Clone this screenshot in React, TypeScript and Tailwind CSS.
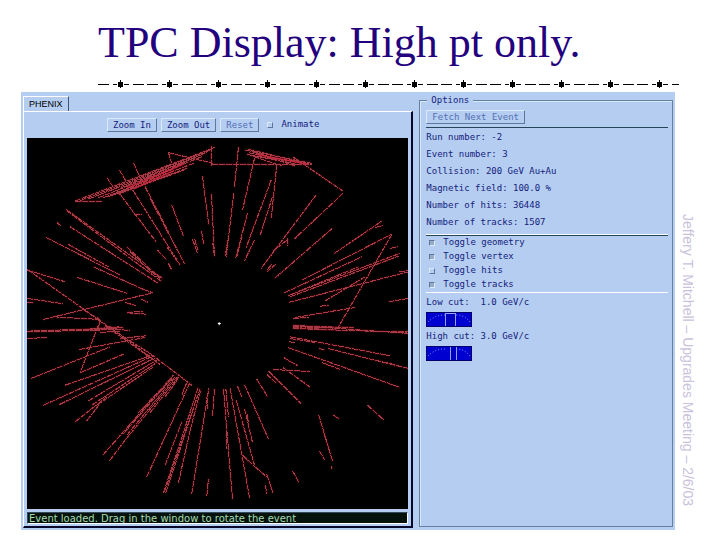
import { useState } from 'react'

// x1,y1 x2,y2 pairs, one group per quadrant of the detector
const quadrants = [
  {
    x: -21,
    y: -24,
    d: 'M165 213L585 52M180 212L570 60M205 207L560 68M235 203L545 80M250 203L520 100M265 200L500 115M280 195L540 75M300 190L490 120M320 180L480 125M300 175L500 92M310 180L470 112M165 214L245 214M445 68L580 100M445 68L455 100M573 48L573 108M260 142L282 175M298 120L325 165M340 98L362 148M290 180L408 335M343 253L365 253M338 180L480 405M375 170L445 305M390 205L440 300M440 300L494 402M412 360L440 390M440 350L480 405M455 225L490 318M547 138L566 285M574 192L583 380M544 303L551 342M517 328L532 368M524 328L533 360M578 340L583 380M445 400L455 420M138 238L430 447M140 242L425 455M110 277L122 287M150 290L415 460M78 322L300 435M145 343L265 410M320 350L420 445M330 365L410 440M220 410L370 478M370 478L398 488M172 442L322 490M22 420L135 455M22 418L280 600M70 568L398 488M22 505L130 521M22 517L42 518M100 560L240 568M315 517L347 526M320 548L378 552M320 546L370 545M362 507L383 516M240 568L235 600M255 590L310 592M230 560L245 575M195 598L300 590M190 538L250 580',
  },
  {
    x: 564,
    y: -24,
    d: 'M-10 103L290 103M70 50L58 170M56 190L33 380M38 330L30 378M118 85L82 240M97 250L62 383M80 320L65 380M185 103L168 265M168 150L93 352M172 200L135 315M118 330L88 392M90 60L290 100M100 58L285 103M100 68L270 102M110 65L240 108M115 78L260 95M95 72L200 108M130 70L230 100M105 75L250 104M232 80L383 183M383 190L237 327M303 195L138 415M215 330L175 362M218 325L218 347M350 296L178 445M155 425L182 402M155 420L170 403M357 370L500 273M480 292L503 286M260 450L530 312M530 312L370 590M208 488L440 380M218 497L553 370M225 500L550 378M220 517L580 425M228 493L430 410M552 425L580 422M520 515L580 505M525 355L548 350M330 512L450 440M315 528L340 526M240 562L420 532M233 565L280 562M232 588L415 592M232 592L370 600M350 545L360 540',
  },
  {
    x: -21,
    y: 561,
    d: 'M20 20L240 15M22 18L310 8M200 12L330 15M240 22L300 18M22 40L82 37M178 73L375 37M33 160L270 65M235 0L180 143M180 143L310 87M260 5L420 118M270 5L410 110M255 0L390 85M300 40L378 32M390 85L515 180M135 180L395 90M70 240L400 92M118 238L405 98M205 227L410 105M215 240L410 112M165 290L260 215M200 287L240 235M230 240L400 125M248 390L460 150M268 407L315 345M315 345L470 155M310 325L455 160M320 330L465 155M390 262L475 155M355 262L450 165M435 215L475 160M380 455L508 175M485 210L500 172M435 420L485 290M430 503L535 185M433 500L540 190M437 503L520 250M475 472L510 315M510 315L543 190M515 505L566 190M560 215L563 250M577 272L583 190M560 512L565 460',
  },
  {
    x: 564,
    y: 561,
    d: 'M232 5L415 8M232 0L580 25M232 10L575 22M528 18L580 20M225 35L525 92M225 40L300 52M222 50L238 52M310 70L330 75M338 70L580 130M480 105L545 120M218 67L555 187M320 112L375 133M205 97L248 122M172 133L285 139M203 127L285 186M160 138L258 235M155 148L185 175M125 162L158 216M67 183L80 215M88 178L160 342M25 190L52 522M32 190L40 275M45 190L103 517M63 225L118 420M88 250L112 352M82 390L120 425M120 425L155 455M155 447L173 502M150 480L155 505M310 268L352 408M325 320L345 385M313 378L328 403M352 268L373 282M457 240L505 284M232 437L252 473M350 422L350 430M95 265L100 290M35 320L35 370',
  },
]

const stats = [
  'Run number: -2',
  'Event number: 3',
  'Collision: 200 GeV Au+Au',
  'Magnetic field: 100.0 %',
  'Number of hits: 36448',
  'Number of tracks: 1507',
]

function Button({ children, disabled }: { children: string; disabled?: boolean }) {
  return (
    <button
      type="button"
      disabled={disabled}
      className="h-3.5 border border-t-[#dcebff] border-l-[#dcebff] border-r-[#5d7898] border-b-[#5d7898] px-[5px] leading-[12px] whitespace-nowrap disabled:text-[#5470b4]"
    >
      {children}
    </button>
  )
}

function Toggle({ label, initial }: { label: string; initial: boolean }) {
  const [on, setOn] = useState(initial)
  return (
    <label className="flex h-3.5 items-center gap-2">
      <input
        type="checkbox"
        checked={on}
        onChange={(e) => setOn(e.target.checked)}
        className="size-1.5 appearance-none border border-t-[#dcebff] border-l-[#dcebff] border-r-[#5d7898] border-b-[#5d7898] checked:border-t-[#5d7898] checked:border-l-[#5d7898] checked:border-r-[#dcebff] checked:border-b-[#dcebff] checked:bg-[#96abc6]"
      />
      {label}
    </label>
  )
}

function CutWheel({ label, value, narrow }: { label: string; value: number; narrow?: boolean }) {
  const [cut, setCut] = useState(value)
  return (
    <label className="block">
      <span className="block h-[19px] pt-[3px] leading-[12px] whitespace-pre">
        {label} {cut.toFixed(1)} GeV/c
      </span>
      <span className="relative block h-[15px] w-[46px] border border-[#00006a] bg-[#0000d0]">
        <svg viewBox="0 0 44 13" className="absolute inset-0 size-full" fill="none" stroke="#7f8fff" strokeDasharray="1 2">
          <path d="M1 9C6 4 11 2 18 2M43 9C39 4 35 2 29 2" />
        </svg>
        <input
          type="range"
          min={-12}
          max={12}
          step={0.5}
          value={cut}
          onChange={(e) => setCut(Number(e.target.value))}
          className={
            narrow
              ? 'absolute inset-0 size-full appearance-none bg-transparent [&::-webkit-slider-thumb]:h-[13px] [&::-webkit-slider-thumb]:w-[7px] [&::-webkit-slider-thumb]:appearance-none [&::-webkit-slider-thumb]:border-x [&::-webkit-slider-thumb]:border-[#8f9fff] [&::-webkit-slider-thumb]:bg-[#0000c0]'
              : 'absolute inset-0 size-full appearance-none bg-transparent [&::-webkit-slider-thumb]:h-[13px] [&::-webkit-slider-thumb]:w-[11px] [&::-webkit-slider-thumb]:appearance-none [&::-webkit-slider-thumb]:border [&::-webkit-slider-thumb]:border-b-0 [&::-webkit-slider-thumb]:border-[#8f9fff] [&::-webkit-slider-thumb]:bg-[#0000c0]'
          }
        />
      </span>
    </label>
  )
}

function Divider() {
  return (
    <svg viewBox="0 0 581 8" className="block w-full" shapeRendering="crispEdges">
      <path d="M0 4h11M15 4h4" stroke="#000" />
      {Array.from({ length: 12 }, (_, i) => (
        <g key={i} transform={`translate(${22 + i * 49} 4)`}>
          <path d="M-2 -2h5v5h-5zM0 -4h1v8h-1z" />
          <path d={i < 11 ? 'M4 0h5M13 0h11M27 0h11M42 0h4' : 'M4 0h5M13 0h7'} stroke="#000" />
        </g>
      ))}
    </svg>
  )
}

function EventDisplay() {
  return (
    <svg viewBox="0 0 1143 1113" className="block w-full bg-black" fill="none">
      {quadrants.map((q) => (
        <g key={`${q.x},${q.y}`} transform={`translate(${q.x} ${q.y})`}>
          <path d={q.d} stroke="#a01020" strokeWidth="8" opacity="0.25" />
          <path d={q.d} stroke="#a83a46" strokeWidth="3" strokeDasharray="18 3" shapeRendering="crispEdges" />
        </g>
      ))}
      {/* densest part of the two jets */}
      <path d="M300 150L470 78M320 152L440 98M690 50L840 78" stroke="#c8253c" strokeWidth="5" opacity="0.8" />
      <path d="M572 556h9M576 552v9" stroke="#fff" strokeWidth="3" />
    </svg>
  )
}

export default function App() {
  return (
    <main className="min-h-screen bg-white">
      <h1 className="pt-[19px] pl-[98px] font-['Liberation_Serif',serif] text-[44px] leading-[48px] whitespace-nowrap text-[#23007d]">
        TPC Display: High pt only.
      </h1>
      <div className="mt-[13px] mr-[41px] ml-[98px]">
        <Divider />
      </div>

      <div className="mt-1 flex pl-[21px]">
        {/* Viewer window */}
        <section className="grid flex-1 grid-cols-[20fr_13fr] gap-1.5 bg-[#b4cdf1] px-0.5 pb-0.5 font-['DejaVu_Sans_Mono',monospace] text-[9px] text-[#14217c]">
          <div className="pt-1">
            <div className="flex">
              <button
                type="button"
                className="h-[15px] border-t border-r border-l border-t-white border-r-[#3f5570] border-l-white px-[5px] font-['Liberation_Sans',sans-serif] leading-[14px] text-black"
              >
                PHENIX
              </button>
            </div>
            <div className="border-t border-r-2 border-b-2 border-l border-t-white border-r-[#05082a] border-b-[#05082a] border-l-white px-[3px] pb-0.5">
              <div className="flex h-[26px] items-center gap-1 pl-20">
                <Button>Zoom In</Button>
                <Button>Zoom Out</Button>
                <Button disabled>Reset</Button>
                <div className="pl-1">
                  <Toggle label="Animate" initial={false} />
                </div>
              </div>
              <EventDisplay />
              <p className="mt-[3px] h-3 overflow-hidden border border-t-[#34495c] border-l-[#34495c] border-r-white border-b-white bg-[#04120c] px-px font-['DejaVu_Sans',sans-serif] text-[10px] leading-[11px] whitespace-nowrap text-[#a4dcae]">
                Event loaded. Drag in the window to rotate the event
              </p>
            </div>
          </div>

          <fieldset className="mt-0.5 mb-px min-w-0 border border-[#66809f] pr-1 pl-1.5 shadow-[inset_1px_1px_0_#d8e8ff]">
            <legend className="ml-px bg-[#b4cdf1] px-1 leading-[12px]">Options</legend>
            <div className="pt-1">
              <Button disabled>Fetch Next Event</Button>
            </div>
            <hr className="mt-0.5 border-t border-[#25455a]" />
            <ul className="pt-px pb-[3px]">
              {stats.map((s) => (
                <li key={s} className="h-[17px] leading-[17px] whitespace-nowrap">
                  {s}
                </li>
              ))}
            </ul>
            <hr className="h-0.5 border-t border-b border-t-white border-b-[#25455a]" />
            <div className="pl-[3px]">
              <Toggle label="Toggle geometry" initial />
              <Toggle label="Toggle vertex" initial />
              <Toggle label="Toggle hits" initial={false} />
              <Toggle label="Toggle tracks" initial />
            </div>
            <hr className="border-t border-white" />
            <CutWheel label="Low cut: " value={1} />
            <CutWheel label="High cut:" value={3} narrow />
          </fieldset>
        </section>

        <aside className="w-[45px] pt-[122px] pl-[3px] font-['Liberation_Sans',sans-serif] text-sm whitespace-nowrap text-[#c9c2dc]">
          <p className="[writing-mode:vertical-rl]">Jeffery T. Mitchell – Upgrades Meeting – 2/6/03</p>
        </aside>
      </div>
    </main>
  )
}
